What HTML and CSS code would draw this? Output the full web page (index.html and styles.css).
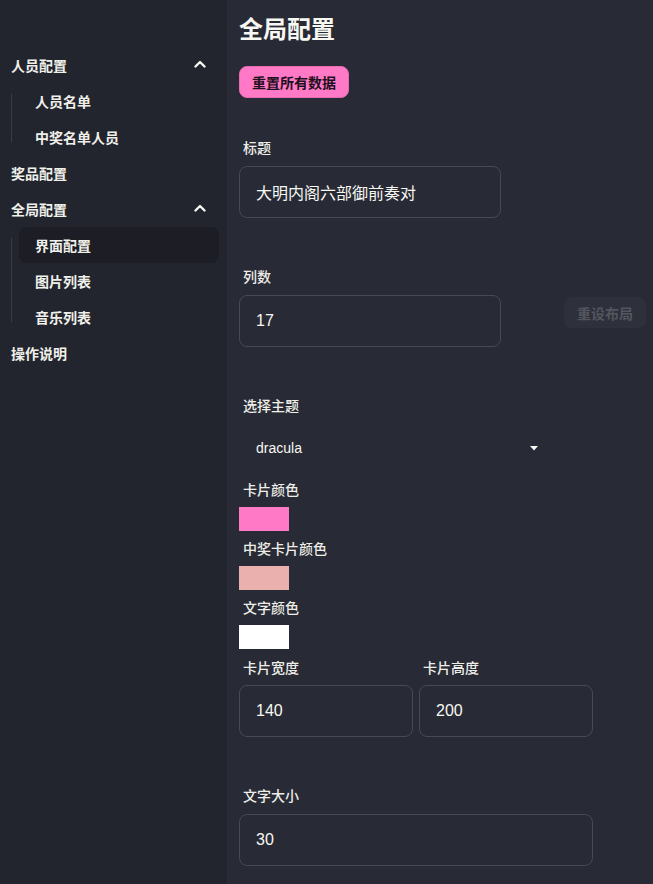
FILE: index.html
```html
<!DOCTYPE html>
<html lang="zh-CN">
<head>
<meta charset="utf-8">
<title>全局配置</title>
<link rel="stylesheet" href="styles.css">
</head>
<body>
<div class="app">
  <aside class="sidebar">
    <ul class="menu">
      <li class="group">
        <div class="item top">
          <span>人员配置</span>
          <svg class="chev" width="12" height="8" viewBox="0 0 12 8"><path d="M1.5 6.5 L6 2 L10.5 6.5" fill="none" stroke="#f8f8f2" stroke-width="2.4" stroke-linecap="round" stroke-linejoin="round"/></svg>
        </div>
        <ul class="submenu">
          <li class="item sub">人员名单</li>
          <li class="item sub">中奖名单人员</li>
        </ul>
      </li>
      <li class="item top">奖品配置</li>
      <li class="group">
        <div class="item top">
          <span>全局配置</span>
          <svg class="chev" width="12" height="8" viewBox="0 0 12 8"><path d="M1.5 6.5 L6 2 L10.5 6.5" fill="none" stroke="#f8f8f2" stroke-width="2.4" stroke-linecap="round" stroke-linejoin="round"/></svg>
        </div>
        <ul class="submenu">
          <li class="item sub active">界面配置</li>
          <li class="item sub">图片列表</li>
          <li class="item sub">音乐列表</li>
        </ul>
      </li>
      <li class="item top">操作说明</li>
    </ul>
  </aside>
  <main class="main">
    <h1 class="title">全局配置</h1>
    <button class="btn btn-pink">重置所有数据</button>

    <div class="field first">
      <label class="label">标题</label>
      <div class="input w262">大明内阁六部御前奏对</div>
    </div>

    <div class="field">
      <label class="label">列数</label>
      <div class="row">
        <div class="input w262">17</div>
        <button class="btn btn-disabled">重设布局</button>
      </div>
    </div>

    <div class="field">
      <label class="label">选择主题</label>
      <div class="select">
        <span>dracula</span>
        <svg width="8" height="5" viewBox="0 0 8 5"><path d="M0 0 H8 L4 4.5 Z" fill="#f8f8f2"/></svg>
      </div>
    </div>

    <div class="color-field">
      <label class="label">卡片颜色</label>
      <div class="swatch pink"></div>
    </div>
    <div class="color-field">
      <label class="label">中奖卡片颜色</label>
      <div class="swatch salmon"></div>
    </div>
    <div class="color-field">
      <label class="label">文字颜色</label>
      <div class="swatch white"></div>
    </div>

    <div class="pair">
      <div class="col">
        <label class="label">卡片宽度</label>
        <div class="input w174">140</div>
      </div>
      <div class="col">
        <label class="label">卡片高度</label>
        <div class="input w174">200</div>
      </div>
    </div>

    <div class="field">
      <label class="label">文字大小</label>
      <div class="input w354">30</div>
    </div>
  </main>
</div>
</body>
</html>
```

FILE: styles.css
```css
* { box-sizing: border-box; }
html, body { margin: 0; padding: 0; height: 100%; }
body {
  background: #282a36;
  color: #f8f8f2;
  font-family: "Liberation Sans", "Noto Sans CJK SC", sans-serif;
}
.app {
  display: flex;
  min-height: 884px;
}
.sidebar {
  width: 227px;
  flex: none;
  background: #22242e;
  padding: 47px 8px 0 11px;
}
.menu, .submenu {
  list-style: none;
  margin: 0;
  padding: 0;
}
.item {
  height: 36px;
  display: flex;
  align-items: center;
  font-size: 14px;
  font-weight: 600;
  color: #f0f0ea;
}
.item.top {
  justify-content: space-between;
}
.chev {
  margin-right: 13px;
  margin-top: -3px;
}
.submenu {
  position: relative;
}
.submenu::before {
  content: "";
  position: absolute;
  left: 0;
  top: 11px;
  bottom: 13px;
  width: 1px;
  background: #3a3c48;
}
.item.sub {
  margin-left: 8px;
  padding-left: 16px;
  border-radius: 8px;
}
.item.sub.active {
  background: #1c1d25;
}
.main {
  flex: 1;
  padding: 14px 12px 0 12px;
}
.title {
  margin: 0 0 20px 0;
  font-size: 24px;
  line-height: 32px;
  font-weight: 700;
  color: #f8f8f2;
}
.btn {
  height: 32px;
  padding: 0 12px;
  border-radius: 8px;
  font-family: inherit;
  font-size: 14px;
  font-weight: 700;
  border: 1px solid transparent;
  white-space: nowrap;
  flex: none;
  cursor: pointer;
}
.btn-pink {
  background: #ff79c6;
  border-color: #e86cb3;
  color: #1f1020;
}
.btn-disabled {
  height: 31px;
  background: #2e303b;
  color: #54565f;
  margin-left: 63px;
  margin-top: 2px;
  border-radius: 8px;
}
.field { margin-top: 41px; }
.field.first { margin-top: 32px; }
.label {
  display: block;
  padding: 8px 4px;
  line-height: 20px;
  font-size: 14px;
  font-weight: 500;
  color: #eeeee8;
}
.input {
  flex: none;
  height: 52px;
  border: 1px solid #474955;
  border-radius: 8px;
  padding: 0 16px;
  display: flex;
  align-items: center;
  font-size: 16px;
  color: #f8f8f2;
}
.w262 { width: 262px; }
.w174 { width: 174px; }
.w354 { width: 354px; }
.row {
  display: flex;
  align-items: flex-start;
}
.select {
  width: 315px;
  height: 48px;
  padding: 0 16px 0 17px;
  display: flex;
  align-items: center;
  justify-content: space-between;
  font-size: 14px;
  color: #f8f8f2;
}
.color-field .label { padding: 8px 4px 7px; }
.swatch {
  width: 50px;
  height: 24px;
}
.swatch.pink { background: #ff79c6; }
.swatch.salmon { background: #eab0ad; }
.swatch.white { background: #ffffff; }
.pair {
  display: flex;
  gap: 6px;
  margin-top: 1px;
}
.col { display: flex; flex-direction: column; }
.col .label { padding-bottom: 7px; }
```
